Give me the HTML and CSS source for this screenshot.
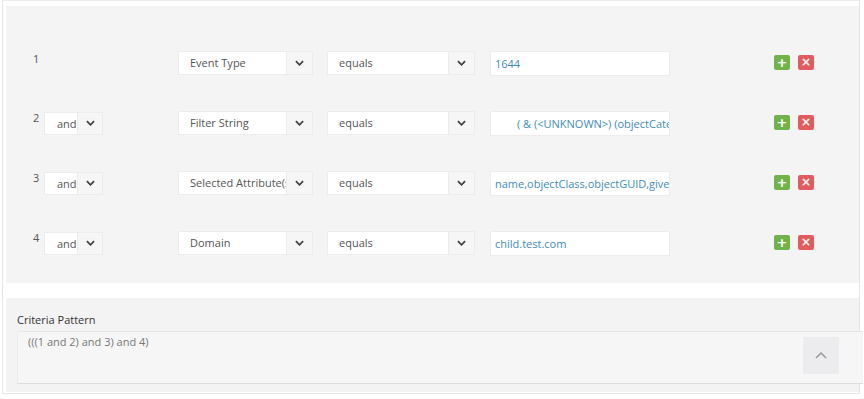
FILE: index.html
```html
<!DOCTYPE html>
<html lang="en">
<head>
  <meta charset="UTF-8" />
  <title>Criteria</title>
  <link rel="stylesheet" href="styles.css">
</head>
<body>
  <div class="frame">
    <div class="rules">

      <div class="rule">
        <div class="lead"><span class="num">1</span></div>
        <div class="select field"><span class="val">Event Type</span><span class="caret"><svg viewBox="0 0 10 6"><polyline points="1,1 5,5 9,1"/></svg></span></div>
        <div class="select op"><span class="val">equals</span><span class="caret"><svg viewBox="0 0 10 6"><polyline points="1,1 5,5 9,1"/></svg></span></div>
        <div class="input">1644</div>
        <div class="actions"><span class="btn add">+</span><span class="btn del">&times;</span></div>
      </div>

      <div class="rule">
        <div class="lead"><span class="num">2</span>
          <div class="select join"><span class="val">and</span><span class="caret"><svg viewBox="0 0 10 6"><polyline points="1,1 5,5 9,1"/></svg></span></div>
        </div>
        <div class="select field"><span class="val">Filter String</span><span class="caret"><svg viewBox="0 0 10 6"><polyline points="1,1 5,5 9,1"/></svg></span></div>
        <div class="select op"><span class="val">equals</span><span class="caret"><svg viewBox="0 0 10 6"><polyline points="1,1 5,5 9,1"/></svg></span></div>
        <div class="input indent">( &amp; (&lt;UNKNOWN&gt;) (objectCategory=person))</div>
        <div class="actions"><span class="btn add">+</span><span class="btn del">&times;</span></div>
      </div>

      <div class="rule">
        <div class="lead"><span class="num">3</span>
          <div class="select join"><span class="val">and</span><span class="caret"><svg viewBox="0 0 10 6"><polyline points="1,1 5,5 9,1"/></svg></span></div>
        </div>
        <div class="select field"><span class="val">Selected Attribute(s)</span><span class="caret"><svg viewBox="0 0 10 6"><polyline points="1,1 5,5 9,1"/></svg></span></div>
        <div class="select op"><span class="val">equals</span><span class="caret"><svg viewBox="0 0 10 6"><polyline points="1,1 5,5 9,1"/></svg></span></div>
        <div class="input">name,objectClass,objectGUID,givenName</div>
        <div class="actions"><span class="btn add">+</span><span class="btn del">&times;</span></div>
      </div>

      <div class="rule">
        <div class="lead"><span class="num">4</span>
          <div class="select join"><span class="val">and</span><span class="caret"><svg viewBox="0 0 10 6"><polyline points="1,1 5,5 9,1"/></svg></span></div>
        </div>
        <div class="select field"><span class="val">Domain</span><span class="caret"><svg viewBox="0 0 10 6"><polyline points="1,1 5,5 9,1"/></svg></span></div>
        <div class="select op"><span class="val">equals</span><span class="caret"><svg viewBox="0 0 10 6"><polyline points="1,1 5,5 9,1"/></svg></span></div>
        <div class="input">child.test.com</div>
        <div class="actions"><span class="btn add">+</span><span class="btn del">&times;</span></div>
      </div>

    </div>

    <div class="pattern">
      <p class="label">Criteria Pattern</p>
      <div class="pattern-box">
        <span>(((1 and 2) and 3) and 4)</span>
        <span class="to-top"><svg viewBox="0 0 12 7"><polyline points="1,6 6,1 11,6"/></svg></span>
      </div>
    </div>
  </div>
</body>
</html>
```

FILE: styles.css
```css
* {
  box-sizing: border-box;
  margin: 0;
  padding: 0;
}
body {
  background: #fff;
  font-family: 'Open Sans', sans-serif;
  font-size: 11px;
  color: #555;
  width: 864px;
  height: 399px;
  overflow: hidden;
}
.frame {
  margin-left: 2px;
  width: 858px;
  height: 394px;
  border-left: 1px solid #e4e4e4;
  border-top: 1px solid #ececec;
  border-right: 1px solid #e4e4e4;
  border-bottom: 1px solid #e8e8e8;
  padding: 5px 0 0 3px;
}
.rules {
  background: #f4f4f4;
  height: 277px;
  padding: 27px 0 0 0;
}
.rule {
  display: flex;
  align-items: center;
  height: 60px;
}
.lead {
  width: 172px;
  padding-left: 27px;
  display: flex;
  align-items: flex-start;
}
.num {
  width: 11px;
  margin-top: -2px;
  font-size: 11px;
  color: #555;
}
.rule:first-child .num {
  margin-top: -10px;
}
.select {
  display: flex;
  height: 24px;
  background: #fff;
  border: 1px solid #ececec;
}
.select .val {
  flex: 1;
  padding-left: 11px;
  line-height: 22px;
  white-space: nowrap;
  overflow: hidden;
}
.caret {
  width: 26px;
  background: #f6f6f6;
  border-left: 1px solid #ececec;
  display: flex;
  align-items: center;
  justify-content: center;
}
.caret svg {
  width: 9px;
  height: 6px;
  fill: none;
  stroke: #444;
  stroke-width: 2;
}
.join {
  width: 59px;
  height: 23px;
}
.join .val {
  padding-left: 12px;
  line-height: 21px;
}
.join .caret {
  width: 25px;
}
.field {
  width: 135px;
  margin-right: 14px;
}
.op {
  width: 148px;
  margin-right: 15px;
}
.input {
  width: 180px;
  height: 25px;
  background: #fff;
  border: 1px solid #ececec;
  padding-left: 4px;
  line-height: 23px;
  color: #3d8bbd;
  white-space: nowrap;
  overflow: hidden;
}
.input.indent {
  padding-left: 26px;
}
.actions {
  margin-left: 104px;
  display: flex;
  gap: 8px;
  margin-top: -2px;
}
.btn {
  width: 16px;
  height: 15px;
  border-radius: 2px;
  color: #fff;
  font-family: 'DejaVu Sans', sans-serif;
  font-weight: bold;
  font-size: 13px;
  line-height: 15px;
  text-align: center;
}
.add {
  background: #6fb34a;
}
.del {
  background: #e25c5e;
  font-size: 12px;
}
.pattern {
  margin-top: 15px;
  background: #f3f3f3;
  height: 94px;
  padding: 14px 0 0 11px;
}
.label {
  color: #333;
  font-size: 11px;
  margin-bottom: 4px;
}
.pattern-box {
  position: relative;
  height: 53px;
  margin-right: -4px;
  background: #f6f6f6;
  border-top: 1px solid #e6e6e6;
  border-bottom: 1px solid #dcdcdc;
  border-left: 1px solid #ececec;
  padding: 2px 0 0 10px;
  color: #777;
}
.to-top {
  position: absolute;
  right: 24px;
  top: 5px;
  width: 36px;
  height: 37px;
  background: #ececef;
  display: flex;
  align-items: center;
  justify-content: center;
}
.to-top svg {
  width: 12px;
  height: 7px;
  fill: none;
  stroke: #999;
  stroke-width: 1.5;
}
```
